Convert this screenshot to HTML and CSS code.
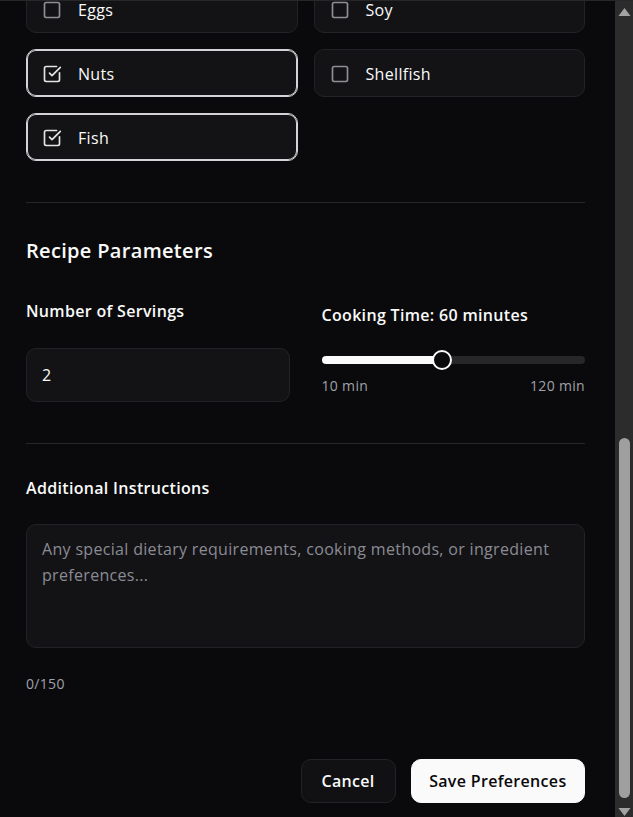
FILE: index.html
```html
<!DOCTYPE html>
<html lang="en">
<head>
<meta charset="utf-8">
<title>Recipe Preferences</title>
<link rel="stylesheet" href="styles.css">
</head>
<body>
<div class="window">
<div class="dialog">
  <header class="dialog-header">
    <h2 class="dialog-title">Recipe Preferences</h2>
    <p class="dialog-desc">Customize how your recipes are generated.</p>
  </header>

  <section class="section">
    <h3 class="section-title">Dietary Preferences</h3>
    <div class="option-grid">
      <div class="option"><svg class="box" viewBox="0 0 24 24"><rect x="3" y="3" width="18" height="18" rx="2"/></svg><span>Vegetarian</span></div>
      <div class="option"><svg class="box" viewBox="0 0 24 24"><rect x="3" y="3" width="18" height="18" rx="2"/></svg><span>Vegan</span></div>
      <div class="option"><svg class="box" viewBox="0 0 24 24"><rect x="3" y="3" width="18" height="18" rx="2"/></svg><span>Gluten-Free</span></div>
      <div class="option"><svg class="box" viewBox="0 0 24 24"><rect x="3" y="3" width="18" height="18" rx="2"/></svg><span>Dairy-Free</span></div>
      <div class="option"><svg class="box" viewBox="0 0 24 24"><rect x="3" y="3" width="18" height="18" rx="2"/></svg><span>Keto</span></div>
      <div class="option"><svg class="box" viewBox="0 0 24 24"><rect x="3" y="3" width="18" height="18" rx="2"/></svg><span>Paleo</span></div>
    </div>
  </section>

  <section class="section">
    <h3 class="section-title">Cuisine Preferences</h3>
    <div class="option-grid">
      <div class="option"><svg class="box" viewBox="0 0 24 24"><rect x="3" y="3" width="18" height="18" rx="2"/></svg><span>Italian</span></div>
      <div class="option"><svg class="box" viewBox="0 0 24 24"><rect x="3" y="3" width="18" height="18" rx="2"/></svg><span>Mexican</span></div>
      <div class="option"><svg class="box" viewBox="0 0 24 24"><rect x="3" y="3" width="18" height="18" rx="2"/></svg><span>Chinese</span></div>
      <div class="option"><svg class="box" viewBox="0 0 24 24"><rect x="3" y="3" width="18" height="18" rx="2"/></svg><span>Indian</span></div>
      <div class="option"><svg class="box" viewBox="0 0 24 24"><rect x="3" y="3" width="18" height="18" rx="2"/></svg><span>Japanese</span></div>
      <div class="option"><svg class="box" viewBox="0 0 24 24"><rect x="3" y="3" width="18" height="18" rx="2"/></svg><span>Thai</span></div>
      <div class="option"><svg class="box" viewBox="0 0 24 24"><rect x="3" y="3" width="18" height="18" rx="2"/></svg><span>French</span></div>
      <div class="option"><svg class="box" viewBox="0 0 24 24"><rect x="3" y="3" width="18" height="18" rx="2"/></svg><span>Mediterranean</span></div>
    </div>
  </section>

  <section class="section">
    <h3 class="section-title">Allergies</h3>
    <div class="option-grid">
      <div class="option"><svg class="box" viewBox="0 0 24 24"><rect x="3" y="3" width="18" height="18" rx="2"/></svg><span>Dairy</span></div>
      <div class="option"><svg class="box" viewBox="0 0 24 24"><rect x="3" y="3" width="18" height="18" rx="2"/></svg><span>Gluten</span></div>
      <div class="option"><svg class="box" viewBox="0 0 24 24"><rect x="3" y="3" width="18" height="18" rx="2"/></svg><span>Eggs</span></div>
      <div class="option"><svg class="box" viewBox="0 0 24 24"><rect x="3" y="3" width="18" height="18" rx="2"/></svg><span>Soy</span></div>
      <div class="option checked"><svg class="box" viewBox="0 0 24 24"><path d="M21 10.5V19a2 2 0 0 1-2 2H5a2 2 0 0 1-2-2V5a2 2 0 0 1 2-2h12.5"/><path d="m9 11 3 3L22 4"/></svg><span>Nuts</span></div>
      <div class="option"><svg class="box" viewBox="0 0 24 24"><rect x="3" y="3" width="18" height="18" rx="2"/></svg><span>Shellfish</span></div>
      <div class="option checked"><svg class="box" viewBox="0 0 24 24"><path d="M21 10.5V19a2 2 0 0 1-2 2H5a2 2 0 0 1-2-2V5a2 2 0 0 1 2-2h12.5"/><path d="m9 11 3 3L22 4"/></svg><span>Fish</span></div>
    </div>
  </section>

  <section class="section">
    <h3 class="section-title">Recipe Parameters</h3>
    <div class="param-grid">
      <div class="field">
        <label class="field-label" for="servings">Number of Servings</label>
        <input id="servings" class="text-input" type="number" value="2" min="1">
      </div>
      <div class="field">
        <label class="field-label slider-label" for="time">Cooking Time: 60 minutes</label>
        <input id="time" class="range" type="range" min="10" max="120" value="60" style="--pct: 45.8%">
        <div class="range-scale"><span>10 min</span><span>120 min</span></div>
      </div>
    </div>
  </section>

  <section class="section last">
    <label class="field-label block" for="notes">Additional Instructions</label>
    <textarea id="notes" class="textarea" placeholder="Any special dietary requirements, cooking methods, or ingredient preferences..."></textarea>
    <div class="counter">0/150</div>
  </section>

  <footer class="dialog-footer">
    <button class="btn btn-outline" type="button">Cancel</button>
    <button class="btn btn-primary" type="button">Save Preferences</button>
  </footer>
</div>
<div class="scrollbar" aria-hidden="true">
  <div class="sb-btn"><svg viewBox="0 0 18 17" width="18" height="17"><polygon points="3.5,15 9.5,7 15.5,15"/></svg></div>
  <div class="sb-track"><div class="sb-thumb" style="height: 360px"></div></div>
  <div class="sb-btn"><svg viewBox="0 0 18 17" width="18" height="17"><polygon points="3.5,8 15.5,8 9.5,16"/></svg></div>
</div>
</div>
<script src="script.js"></script>
</body>
</html>
```

FILE: styles.css
```css
html, body {
  margin: 0;
  height: 100%;
  background: #0a0a0c;
}

body {
  font-family: "Open Sans", "Noto Sans", sans-serif;
  letter-spacing: 0.02em;
  color: #fafafa;
}

.window {
  box-sizing: border-box;
  height: 100vh;
  display: flex;
  border-top: 1px solid #27272a;
}

.dialog {
  flex: 1;
  min-width: 0;
  overflow-y: auto;
  scrollbar-width: none;
  background: #0a0a0c;
  padding: 0 30px 0 26px;
}
.dialog::-webkit-scrollbar {
  display: none;
}

.scrollbar {
  width: 18px;
  flex: none;
  display: flex;
  flex-direction: column;
  background: #2c2c2c;
}
.sb-btn {
  height: 17px;
  flex: none;
}
.sb-btn svg {
  display: block;
  fill: #a3a3a3;
}
.sb-track {
  flex: 1;
  display: flex;
  flex-direction: column;
  justify-content: flex-end;
  padding: 2px 3px 2px 4px;
}
.sb-thumb {
  background: #9f9f9f;
  border-radius: 6px;
}

.dialog-header {
  padding: 16px 0 20px;
  border-bottom: 1px solid #27272a;
}
.dialog-title {
  margin: 0;
  font-size: 24px;
  line-height: 32px;
  font-weight: 600;
}
.dialog-desc {
  margin: 6px 0 0;
  font-size: 14px;
  line-height: 20px;
  color: #a1a1aa;
}

.section {
  padding: 32px 0 41px;
  border-bottom: 1px solid #27272a;
}
.section.last {
  border-bottom: none;
}
.section-title {
  margin: 0 0 24px;
  font-size: 20px;
  line-height: 32px;
  font-weight: 600;
}

.option-grid {
  display: grid;
  grid-template-columns: 1fr 1fr;
  gap: 16px;
}
.option {
  box-sizing: border-box;
  height: 48px;
  display: flex;
  align-items: center;
  gap: 16px;
  padding: 1px 15px 0;
  background: #131316;
  border: 1px solid #232327;
  border-radius: 10px;
  font-size: 16px;
  line-height: 24px;
  color: #fafafa;
}
.option.checked {
  border-color: #d4d4d8;
  box-shadow: inset 0 0 0 1px #d4d4d8;
}
.box {
  width: 20px;
  height: 20px;
  flex: none;
  fill: none;
  stroke: #8e8e94;
  stroke-width: 2;
  stroke-linecap: round;
  stroke-linejoin: round;
}
.option.checked .box {
  stroke: #e4e4e7;
}

.section-title + .param-grid {
  margin-top: 32px;
}
.param-grid {
  display: grid;
  grid-template-columns: 1fr 1fr;
  column-gap: 32px;
  align-items: start;
}
.field {
  display: flex;
  flex-direction: column;
}
.field-label {
  font-size: 16px;
  line-height: 24px;
  font-weight: 600;
  margin-bottom: 25px;
}
.field-label.block {
  display: block;
  margin-bottom: 24px;
}
.slider-label {
  margin-top: 4px;
  margin-bottom: 23px;
}

.text-input {
  box-sizing: border-box;
  width: 100%;
  height: 54px;
  padding: 0 15px;
  background: #131316;
  border: 1px solid #232327;
  border-radius: 10px;
  color: #fafafa;
  font-family: inherit;
  font-size: 16px;
  letter-spacing: inherit;
  outline: none;
  -moz-appearance: textfield;
}
.text-input::-webkit-inner-spin-button,
.text-input::-webkit-outer-spin-button {
  -webkit-appearance: none;
  margin: 0;
}

.range {
  -webkit-appearance: none;
  appearance: none;
  display: block;
  width: 100%;
  height: 20px;
  margin: 0;
  background: transparent;
}
.range::-webkit-slider-runnable-track {
  height: 8px;
  border-radius: 4px;
  background: linear-gradient(to right, #fafafa var(--pct), #27272a var(--pct));
}
.range::-webkit-slider-thumb {
  -webkit-appearance: none;
  appearance: none;
  box-sizing: border-box;
  width: 20px;
  height: 20px;
  margin-top: -6px;
  border-radius: 50%;
  background: #0a0a0c;
  border: 2px solid #fafafa;
}
.range-scale {
  display: flex;
  justify-content: space-between;
  margin-top: 6px;
  font-size: 14px;
  line-height: 20px;
  color: #a1a1aa;
}

.textarea {
  display: block;
  box-sizing: border-box;
  width: 100%;
  height: 124px;
  padding: 11px 15px;
  margin: 0;
  resize: none;
  background: #131316;
  border: 1px solid #232327;
  border-radius: 10px;
  color: #fafafa;
  font-family: inherit;
  font-size: 16px;
  letter-spacing: inherit;
  line-height: 26px;
  outline: none;
}
.textarea::placeholder {
  color: #8b8b93;
}
.counter {
  margin-top: 26px;
  font-size: 14px;
  line-height: 20px;
  color: #a1a1aa;
}

.dialog-footer {
  display: flex;
  justify-content: flex-end;
  gap: 15px;
  padding: 24px 0 14px;
}
.btn {
  box-sizing: border-box;
  height: 44px;
  border-radius: 10px;
  font-family: inherit;
  font-size: 16px;
  font-weight: 600;
  letter-spacing: inherit;
  cursor: pointer;
}
.btn-outline {
  padding: 0 20px;
  background: #111113;
  color: #fafafa;
  border: 1px solid #232327;
}
.btn-primary {
  padding: 0 17.5px;
  background: #fafafa;
  color: #09090b;
  border: 1px solid #fafafa;
}
```

FILE: script.js
```js
var dialog = document.querySelector('.dialog');
dialog.scrollTop = dialog.scrollHeight;
```
